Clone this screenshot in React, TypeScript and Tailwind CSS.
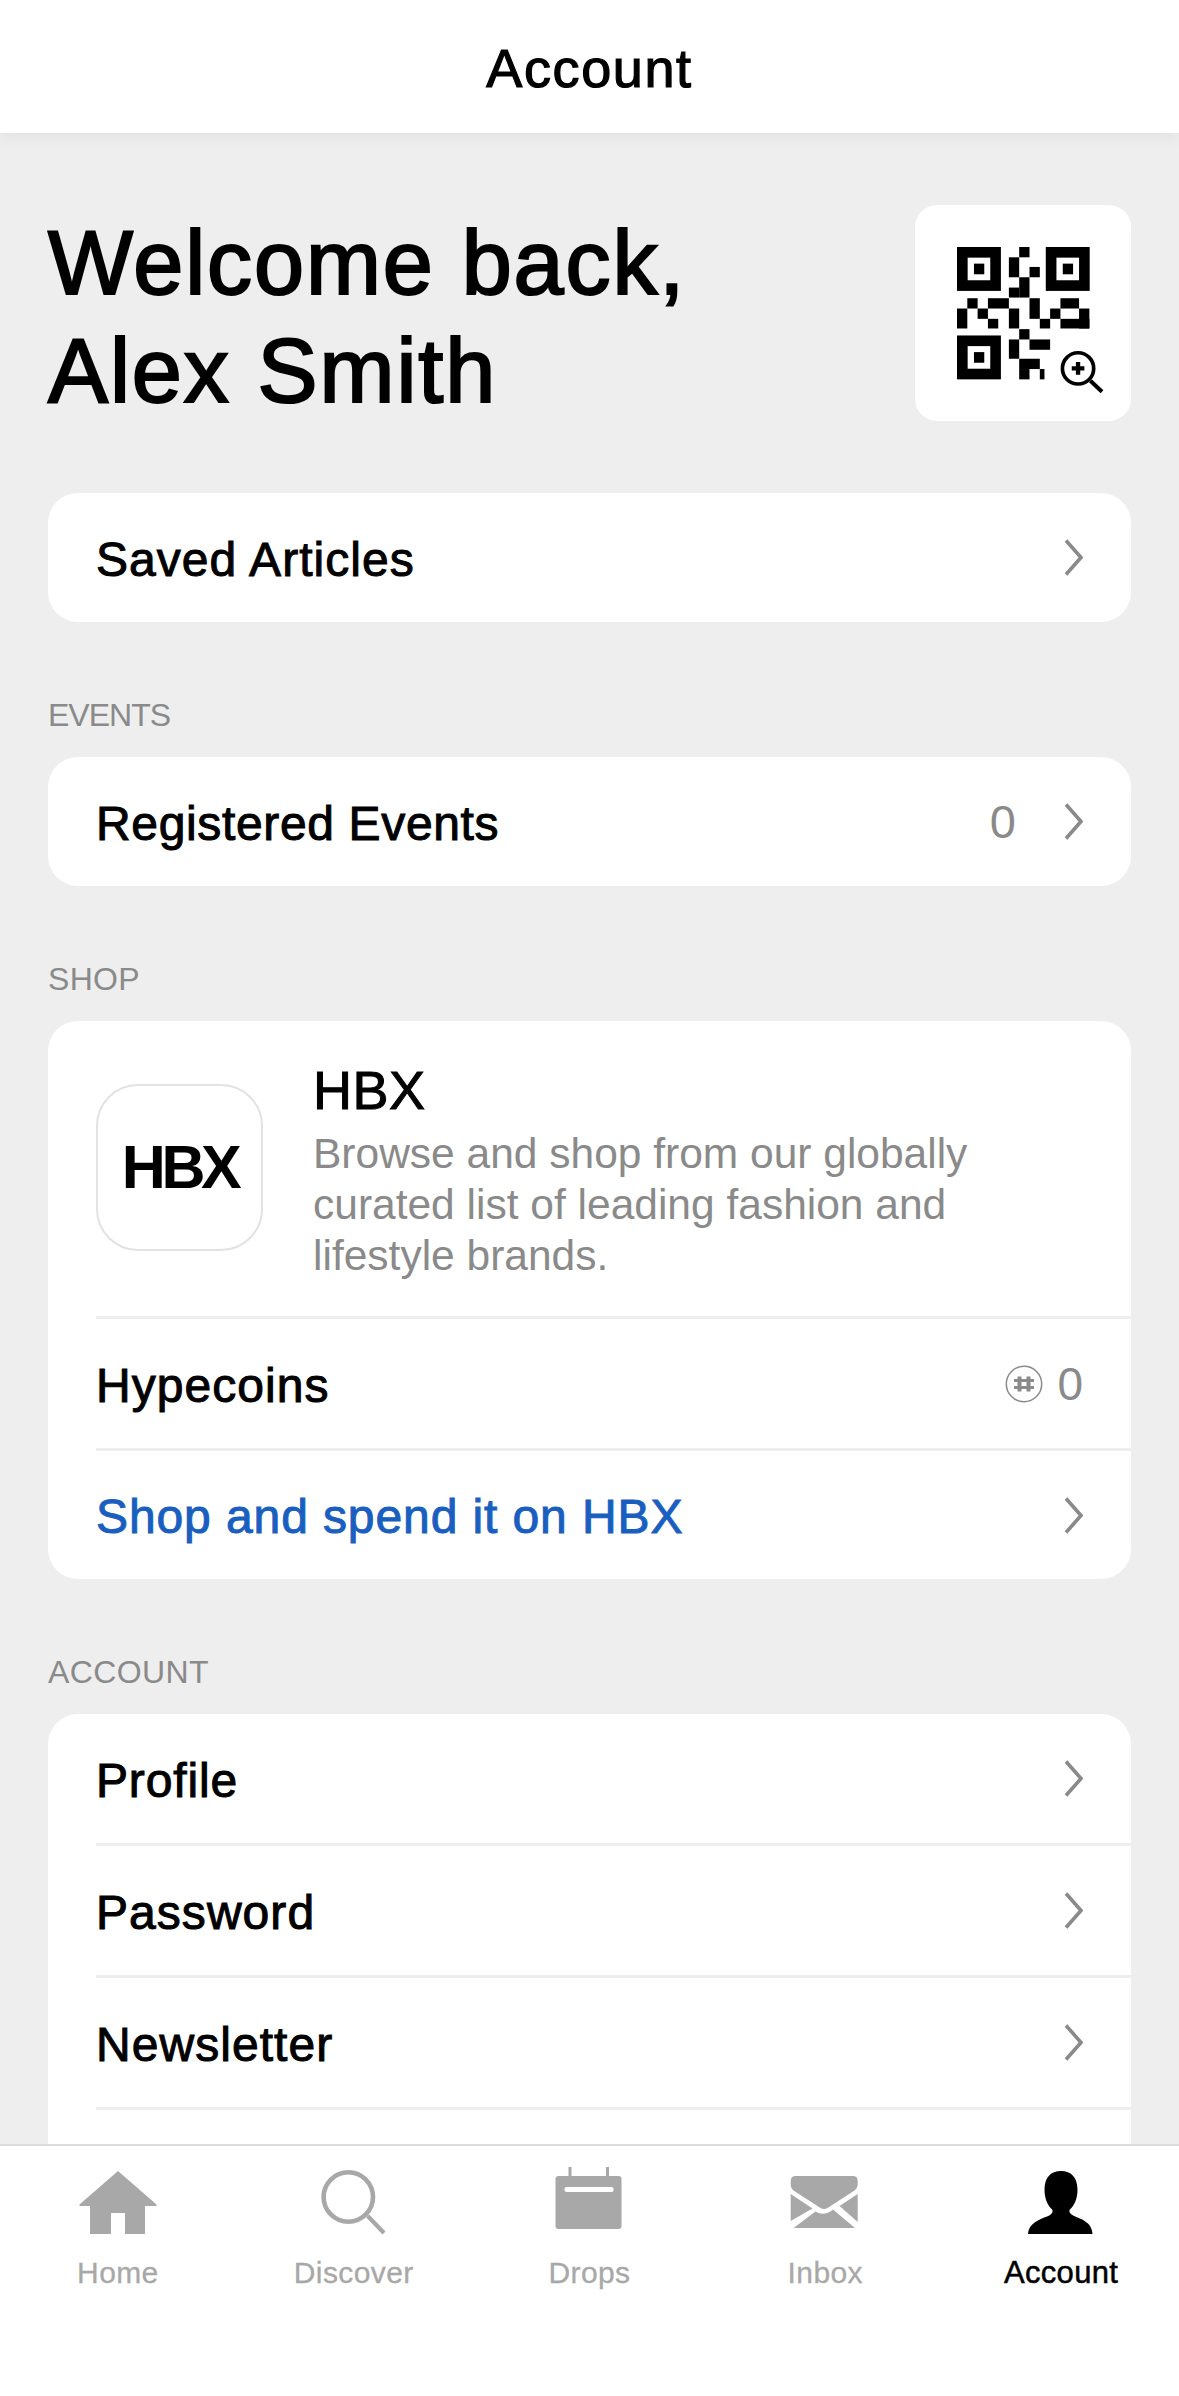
import React from "react";

const Chevron = () => (
  <svg width="20" height="37" viewBox="0 0 20 37" fill="none" className="shrink-0">
    <path d="M3 1.5 L18 18.5 L3 35.5" stroke="#8a8a8a" strokeWidth="3.6" />
  </svg>
);

const Row = ({ label, value, blue, last, tall, spacing }: { label: string; value?: string; blue?: boolean; last?: boolean; tall?: string; spacing?: string }) => (
  <div className={`ml-12 pr-12 flex items-center justify-between ${tall ?? "h-[132px]"} ${last ? "" : "border-b-[3px] border-[#eeeeee]"}`}>
    <span className={`pt-[4px] text-[48px] leading-none ${spacing ?? "tracking-[1.05px]"} ${blue ? "text-[#1a5fc0] [-webkit-text-stroke:1px_#1a5fc0]" : "text-black [-webkit-text-stroke:1px_#000]"}`}>{label}</span>
    <div className="flex items-center gap-[47px]">
      {value ? <span className="text-[47px] leading-none text-[#8a8a8a]">{value}</span> : null}
      <Chevron />
    </div>
  </div>
);

const Section = ({ title, tracking, children }: { title: string; tracking: string; children: React.ReactNode }) => (
  <section className="mt-[73px]">
    <h2 className={`text-[32px] leading-[40px] text-[#8a8a8a] mb-[22px] ${tracking}`}>{title}</h2>
    <div className="bg-white rounded-[30px] overflow-hidden">{children}</div>
  </section>
);

const QR = () => {
  const rects: number[][] = [
    [417, 200, 31, 31], [386, 231, 31, 60], [448, 260, 31, 31], [417, 291, 31, 61], [386, 322, 31, 30],
    [261, 354, 31, 31], [323, 354, 63, 31], [448, 354, 31, 62], [541, 354, 56, 31],
    [230, 385, 31, 60], [292, 385, 31, 31], [386, 385, 31, 60], [510, 385, 31, 31], [597, 385, 31, 60],
    [323, 416, 31, 29], [479, 416, 31, 29], [541, 416, 87, 29],
    [417, 447, 31, 31], [386, 478, 31, 58], [448, 478, 62, 31],
    [417, 536, 62, 31], [417, 567, 31, 31], [479, 567, 14, 31],
  ];
  const finders = [[230, 200], [497, 200], [230, 466]];
  return (
    <svg width="148" height="148" viewBox="230 200 445 445" className="block">
      {finders.map(([x, y]) => (
        <g key={`${x}-${y}`}>
          <rect x={x + 16} y={y + 16} width="100" height="100" fill="none" stroke="#000" strokeWidth="32" />
          <rect x={x + 51} y={y + 50} width="31" height="32" fill="#000" />
        </g>
      ))}
      {rects.map(([x, y, w, h]) => (
        <rect key={`${x}-${y}`} x={x} y={y} width={w} height={h} fill="#000" />
      ))}
      <circle cx="594" cy="565" r="47" fill="#fff" stroke="#000" strokeWidth="11" />
      <path d="M631 602 L666 635" stroke="#000" strokeWidth="12" />
      <path d="M575 565 H613 M594 546 V584" stroke="#000" strokeWidth="13" />
    </svg>
  );
};

const icons: Record<string, React.ReactNode> = {
  Home: <path fill="#a8a8a8" d="M40 5 L78.5 38.5 V40 H67 V68 H47 V47 H33 V68 H12 V40 H1.5 V38.5 Z" />,
  Discover: (
    <g fill="none" stroke="#a8a8a8">
      <circle cx="34.3" cy="31" r="24.7" strokeWidth="4.6" />
      <path d="M53.7 50 L70 67" strokeWidth="4.2" />
    </g>
  ),
  Drops: (
    <g>
      <rect x="6.5" y="10" width="66" height="53" rx="3" fill="#a8a8a8" />
      <rect x="19.5" y="1" width="3" height="10" fill="#a8a8a8" />
      <rect x="57" y="1" width="3" height="10" fill="#a8a8a8" />
      <rect x="15.5" y="21" width="49" height="5" rx="2" fill="#fff" />
    </g>
  ),
  Inbox: (
    <g fill="#a8a8a8">
      <path d="M10 10 H68.5 Q73 10 72.7 16 V19 Q72 23 68 25.5 L42.5 42 Q39 44 35.5 42 L10 25.5 Q6 23 5.7 19 V16 Q5.5 10 10 10 Z" />
      <path d="M5.7 28 L27.5 42.5 L5.7 55 Z" />
      <path d="M72.7 28 L54.5 40 L72.7 56 Z" />
      <path d="M8.6 62 L30.5 45.5 Q39 51 48 43.5 L70 62 Z" />
    </g>
  ),
  Account: (
    <path
      fill="#000"
      d="M40 5 C50 5 56.5 11 56.5 24 C56.5 33 53 40 48.5 44 C48 47 50 48 53 50 C60 53 71 56 71.5 68 H7 C7.5 58 17 54 26 50.5 C30 49 32 47 31.5 44 C27 40 23.5 33 23.5 24 C23.5 11 30 5 40 5 Z"
    />
  ),
};

const Tab = ({ name }: { name: string }) => {
  const active = name === "Account";
  return (
    <div className="flex flex-col items-center">
      <svg width="80" height="72" viewBox="0 0 80 72">{icons[name]}</svg>
      <span className={`mt-[18px] leading-[34px] ${active ? "text-[31px] tracking-[0.3px] text-black [-webkit-text-stroke:0.5px_#000]" : "text-[30px] tracking-[0.4px] text-[#a8a8a8] [-webkit-text-stroke:0.3px_#a8a8a8]"}`}>{name}</span>
    </div>
  );
};

export default function App() {
  return (
    <div className="w-[1179px] h-[2396px] flex flex-col overflow-hidden bg-[#eeeeee] [font-family:'Liberation_Sans',Arial,sans-serif]">
      <header className="relative z-10 h-[133px] shrink-0 bg-white flex items-center justify-center shadow-[0_2px_16px_rgba(0,0,0,0.07)]">
        <h1 className="pt-[3px] text-[54px] leading-none tracking-[1.6px] text-black [-webkit-text-stroke:1.2px_#000]">Account</h1>
      </header>

      <main className="flex-1 min-h-0 overflow-hidden px-12 pt-[72px]">
        <div className="flex items-start justify-between h-[216px]">
          <p className="mt-1 text-[90px] leading-[108px] tracking-[1.9px] text-black [-webkit-text-stroke:2.2px_#000]">
            Welcome back,
            <br />
            Alex Smith
          </p>
          <div className="w-[216px] h-[216px] bg-white rounded-[22px] pl-[42px] pt-[42px]">
            <QR />
          </div>
        </div>

        <div className="mt-[72px] bg-white rounded-[30px]">
          <Row label="Saved Articles" last tall="h-[129px]" />
        </div>

        <Section title="EVENTS" tracking="tracking-[-1px]">
          <Row label="Registered Events" value="0" last tall="h-[129px]" spacing="tracking-[0.65px]" />
        </Section>

        <Section title="SHOP" tracking="tracking-[0.3px]">
          <div className="ml-12 h-[298px] border-b-[3px] border-[#eeeeee] flex items-start gap-[50px] pt-[63px]">
            <div className="w-[167px] h-[167px] shrink-0 rounded-[42px] border-2 border-[#e2e2e2] flex items-center justify-center">
              <span className="text-[61px] leading-none font-bold text-black tracking-[-4.5px]">HBX</span>
            </div>
            <div className="-mt-[24px] pr-12">
              <div className="text-[54px] leading-[60px] tracking-[0.5px] text-black [-webkit-text-stroke:1px_#000]">HBX</div>
              <p className="mt-[8px] text-[42.5px] leading-[51px] text-[#8a8a8a]">
                Browse and shop from our globally curated list of leading fashion and lifestyle brands.
              </p>
            </div>
          </div>
          <div className="ml-12 pr-12 flex items-center justify-between h-[132px] border-b-[3px] border-[#eeeeee]">
            <span className="pt-[4px] text-[48px] leading-none tracking-[1.05px] text-black [-webkit-text-stroke:1px_#000]">Hypecoins</span>
            <div className="flex items-center gap-[14px]">
              <svg width="38" height="38" viewBox="0 0 38 38" fill="none" stroke="#8a8a8a" className="shrink-0">
                <circle cx="19" cy="19" r="17.7" strokeWidth="1.5" />
                <path d="M9 15.5 H29 M9 22.5 H29" strokeWidth="3" />
                <path d="M14.5 11.5 V26.5 M23.5 11.5 V26.5" strokeWidth="4" />
              </svg>
              <span className="text-[46px] leading-none text-[#8a8a8a]">0</span>
            </div>
          </div>
          <Row label="Shop and spend it on HBX" blue last tall="h-[128px]" spacing="tracking-[0.9px]" />
        </Section>

        <Section title="ACCOUNT" tracking="tracking-[0.4px]">
          <Row label="Profile" spacing="tracking-[0.85px]" />
          <Row label="Password" />
          <Row label="Newsletter" />
          <div className="h-[132px]" />
        </Section>
      </main>

      <footer className="h-[252px] shrink-0 bg-white border-t-2 border-[#dcdcdc] grid grid-cols-5 pt-[20px] relative z-10">
        <Tab name="Home" />
        <Tab name="Discover" />
        <Tab name="Drops" />
        <Tab name="Inbox" />
        <Tab name="Account" />
      </footer>
    </div>
  );
}
